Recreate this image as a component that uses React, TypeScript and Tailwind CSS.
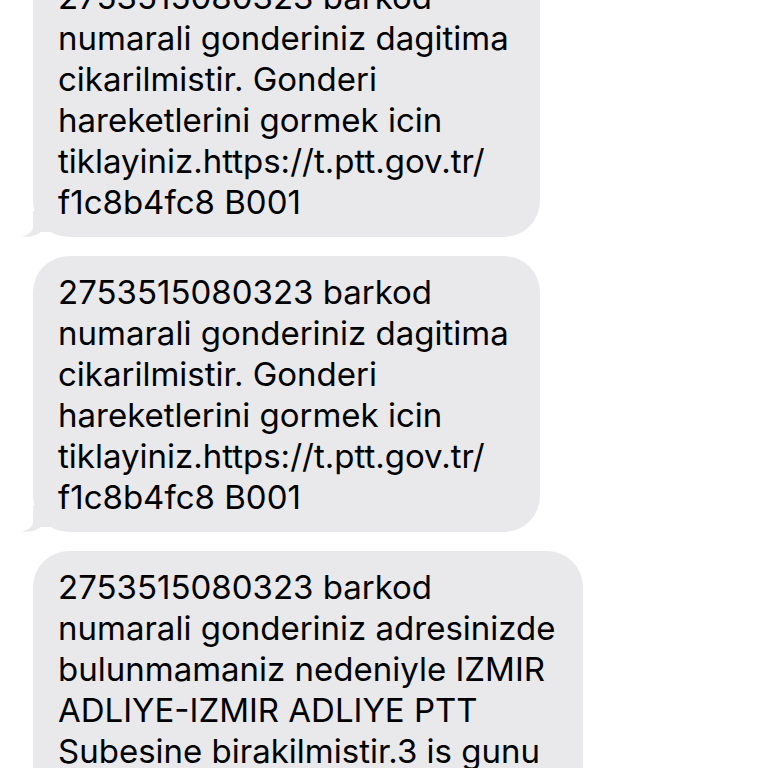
import React from 'react';

type Msg = { lines: string[]; width: string };

const messages: Msg[] = [
  {
    width: 'w-[507px]',
    lines: [
      '2753515080323 barkod',
      'numarali gonderiniz dagitima',
      'cikarilmistir. Gonderi',
      'hareketlerini gormek icin',
      'tiklayiniz.https://t.ptt.gov.tr/',
      'f1c8b4fc8 B001',
    ],
  },
  {
    width: 'w-[507px]',
    lines: [
      '2753515080323 barkod',
      'numarali gonderiniz dagitima',
      'cikarilmistir. Gonderi',
      'hareketlerini gormek icin',
      'tiklayiniz.https://t.ptt.gov.tr/',
      'f1c8b4fc8 B001',
    ],
  },
  {
    width: 'w-[550px]',
    lines: [
      '2753515080323 barkod',
      'numarali gonderiniz adresinizde',
      'bulunmamaniz nedeniyle IZMIR',
      'ADLIYE-IZMIR ADLIYE PTT',
      'Subesine birakilmistir.3 is gunu',
      'icinde teslim alabilirsiniz.',
      'B001',
    ],
  },
];

function Tail() {
  return (
    <svg
      className="absolute left-[-11px] bottom-0"
      width="32"
      height="26"
      viewBox="0 0 32 26"
    >
      <path
        d="M11 0 L11 15 C11 20 8 23.5 0 25.5 C7 26.5 14 25 19 21 L32 21 L32 0 Z"
        fill="#e9e9eb"
      />
    </svg>
  );
}

function Bubble({ msg }: { msg: Msg }) {
  return (
    <div className={`relative ${msg.width}`}>
      <div className="relative z-10 rounded-[36px] bg-[#e9e9eb] pl-[25px] pr-4 pt-[16px] pb-[14px]">
        {msg.lines.map((line, i) => (
          <div key={i} className="whitespace-nowrap text-[33px] leading-[41px] text-black">
            {line}
          </div>
        ))}
      </div>
      <Tail />
    </div>
  );
}

export default function App() {
  return (
    <div
      className="h-[768px] w-[768px] overflow-hidden bg-white"
      style={{ fontFamily: 'Inter, "Noto Sans", sans-serif' }}
    >
      <div className="mt-[-39px] flex flex-col gap-[19px] pl-[33px]">
        {messages.map((m, i) => (
          <Bubble key={i} msg={m} />
        ))}
      </div>
    </div>
  );
}
